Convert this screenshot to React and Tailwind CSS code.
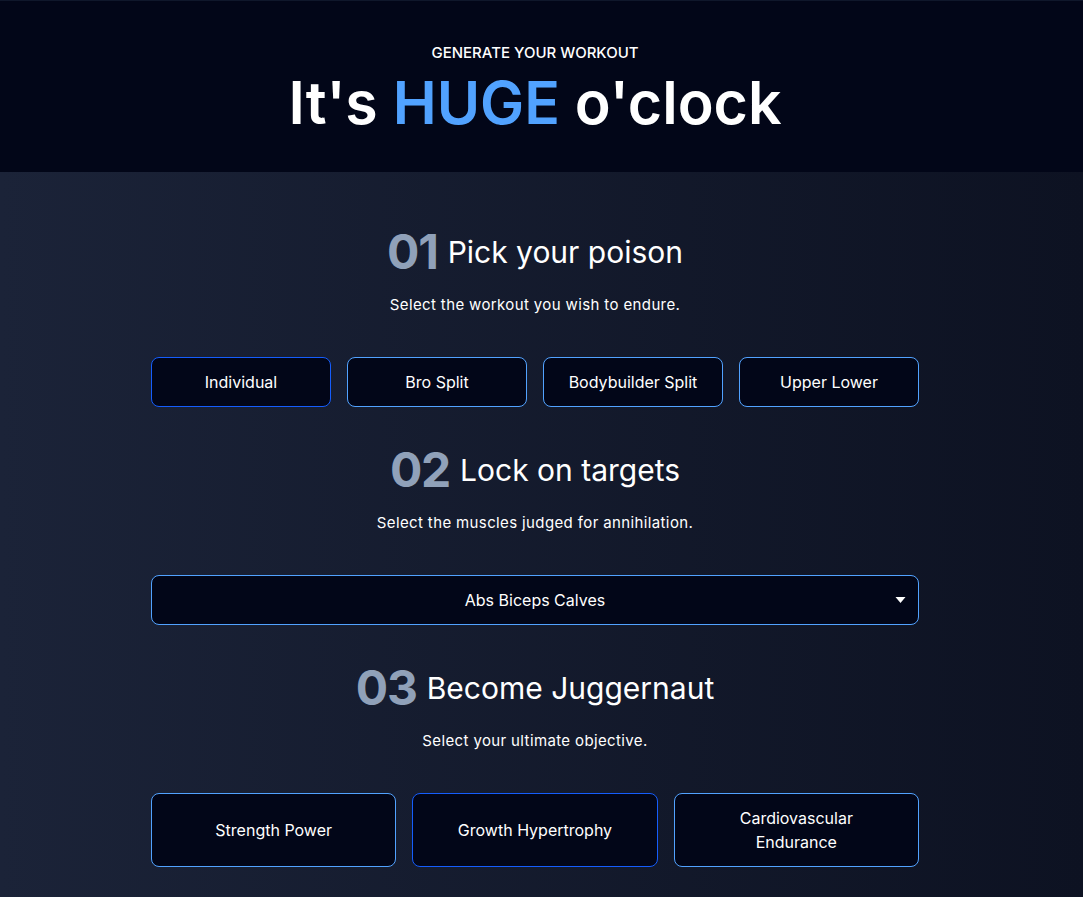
import React, { useState } from "react";

const splits = ["Individual", "Bro Split", "Bodybuilder Split", "Upper Lower"];
const goals = ["Strength Power", "Growth Hypertrophy", "Cardiovascular Endurance"];

const SectionHeader = ({ index, title, description }) => {
  return (
    <div className="flex flex-col items-center gap-[19px]">
      <div className="flex items-center justify-center gap-2.5">
        <p className="text-5xl leading-none font-bold tracking-tight text-slate-400">{index}</p>
        <h4 className="text-3xl leading-none text-white">{title}</h4>
      </div>
      <p className="text-[15px] leading-5 tracking-wide text-white">{description}</p>
    </div>
  );
};

const App = () => {
  const [poison, setPoison] = useState("Individual");
  const [goal, setGoal] = useState("Growth Hypertrophy");

  return (
    <div
      className="min-h-screen flex flex-col"
      style={{ fontFamily: "Inter, 'Noto Sans', sans-serif" }}
    >
      <header className="flex flex-col items-center gap-2.5 bg-slate-950 pt-[42px] pb-[40px] pr-[13px] border-t border-slate-900">
        <p className="text-[15px] leading-5 font-medium uppercase text-white">Generate your workout</p>
        <h1 className="text-[59px] leading-none font-semibold text-white">
          It's <span className="text-blue-400">HUGE</span> o'clock
        </h1>
      </header>

      <main className="flex-1 bg-gradient-to-r from-[#1b2338] to-[#0d1222] pt-14 pb-24 pr-[13px]">
        <div className="max-w-3xl mx-auto flex flex-col">
          <SectionHeader
            index="01"
            title="Pick your poison"
            description="Select the workout you wish to endure."
          />
          <div className="grid grid-cols-4 gap-4 mt-[42px]">
            {splits.map((split) => (
              <button
                key={split}
                onClick={() => setPoison(split)}
                className={
                  "bg-slate-950 border rounded-lg py-3 px-4 text-base leading-6 text-white " +
                  (poison === split ? "border-blue-600" : "border-blue-400")
                }
              >
                {split}
              </button>
            ))}
          </div>

          <div className="mt-[39px]">
            <SectionHeader
              index="02"
              title="Lock on targets"
              description="Select the muscles judged for annihilation."
            />
          </div>
          <button className="relative mt-[42px] flex items-center justify-center bg-slate-950 border border-blue-400 rounded-lg py-3 px-4 text-base leading-6 text-white">
            <p>Abs Biceps Calves</p>
            <svg
              className="absolute right-3 top-1/2 -translate-y-1/2"
              width="11"
              height="7"
              viewBox="0 0 11 7"
            >
              <path d="M0.5 0.5h10l-5 6z" fill="white" />
            </svg>
          </button>

          <div className="mt-[39px]">
            <SectionHeader
              index="03"
              title="Become Juggernaut"
              description="Select your ultimate objective."
            />
          </div>
          <div className="grid grid-cols-3 gap-4 mt-[42px]">
            {goals.map((g) => (
              <button
                key={g}
                onClick={() => setGoal(g)}
                className={
                  "bg-slate-950 border rounded-lg py-3 px-10 text-base leading-6 text-white " +
                  (goal === g ? "border-blue-600" : "border-blue-400")
                }
              >
                {g}
              </button>
            ))}
          </div>
        </div>
      </main>
    </div>
  );
};

export default App;
